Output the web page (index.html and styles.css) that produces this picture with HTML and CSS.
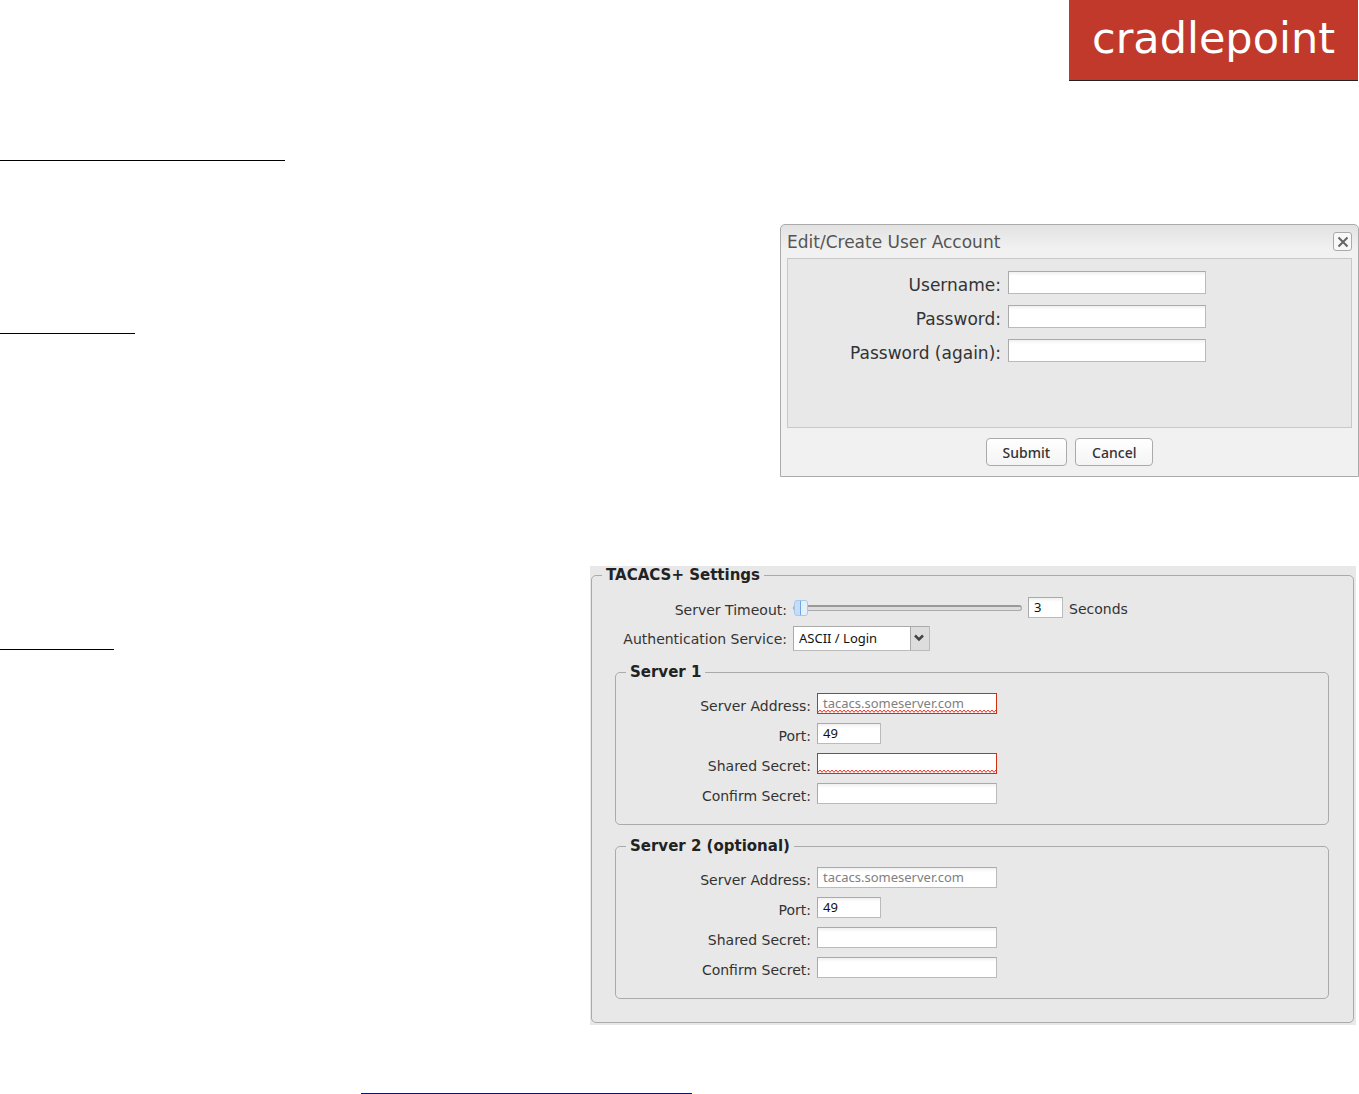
FILE: index.html
```html
<!DOCTYPE html>
<html lang="en">
<head>
  <meta charset="UTF-8" />
  <meta name="viewport" content="width=device-width, initial-scale=1.0"/>
  <title>Cradlepoint - TACACS+ Settings</title>
  <link rel="stylesheet" href="styles.css">
</head>
<body>
  <header class="header">
    <div class="logo">cradlepoint</div>
  </header>

  <main>
    <hr class="rule rule-top">

    <!-- User account -->
    <section class="row row-account">
      <hr class="rule rule-account">

      <form class="dialog">
        <div class="dialog-header">
          <h2>Edit/Create User Account</h2>
          <button type="button" class="close" aria-label="Close">
            <svg width="12" height="12" viewBox="0 0 12 12"><path d="M1.5 1.5l9 9M10.5 1.5l-9 9" stroke="#666" stroke-width="2" fill="none"/></svg>
          </button>
        </div>
        <div class="dialog-body">
          <label for="username">Username:</label>
          <input type="text" id="username">
          <label for="password">Password:</label>
          <input type="password" id="password">
          <label for="password2">Password (again):</label>
          <input type="password" id="password2">
        </div>
        <div class="dialog-footer">
          <button type="button" class="btn">Submit</button>
          <button type="button" class="btn">Cancel</button>
        </div>
      </form>
    </section>

    <!-- TACACS+ -->
    <section class="row row-tacacs">
      <hr class="rule rule-tacacs">

      <form class="panel">
        <fieldset class="outer">
          <legend>TACACS+ Settings</legend>
          <div class="field">
            <label for="timeout">Server Timeout:</label>
            <input type="range" id="timeout" class="slider" min="3" max="60" value="3">
            <input type="text" class="seconds" value="3" aria-label="Timeout in seconds">
            <span>Seconds</span>
          </div>
          <div class="field">
            <label for="service">Authentication Service:</label>
            <span class="select">
              <select id="service">
                <option>ASCII / Login</option>
                <option>PAP</option>
                <option>CHAP</option>
              </select>
              <svg class="arrow" width="10" height="8" viewBox="0 0 10 8"><path d="M1 1.5l4 4 4-4" stroke="#444" stroke-width="2.5" fill="none"/></svg>
            </span>
          </div>

          <fieldset class="server">
            <legend>Server 1</legend>
            <div class="field">
              <label for="address1">Server Address:</label>
              <input type="text" id="address1" class="error" placeholder="tacacs.someserver.com">
            </div>
            <div class="field">
              <label for="port1">Port:</label>
              <input type="text" id="port1" class="port" value="49">
            </div>
            <div class="field">
              <label for="secret1">Shared Secret:</label>
              <input type="password" id="secret1" class="error">
            </div>
            <div class="field">
              <label for="confirm1">Confirm Secret:</label>
              <input type="password" id="confirm1">
            </div>
          </fieldset>

          <fieldset class="server">
            <legend>Server 2 (optional)</legend>
            <div class="field">
              <label for="address2">Server Address:</label>
              <input type="text" id="address2" placeholder="tacacs.someserver.com">
            </div>
            <div class="field">
              <label for="port2">Port:</label>
              <input type="text" id="port2" class="port" value="49">
            </div>
            <div class="field">
              <label for="secret2">Shared Secret:</label>
              <input type="password" id="secret2">
            </div>
            <div class="field">
              <label for="confirm2">Confirm Secret:</label>
              <input type="password" id="confirm2">
            </div>
          </fieldset>
        </fieldset>
      </form>
    </section>

    <hr class="rule rule-bottom">
  </main>
</body>
</html>
```
FILE: styles.css
```css
* {
  margin: 0;
  padding: 0;
  box-sizing: border-box;
}

body {
  background: white;
  color: #333;
  font-family: Verdana, 'DejaVu Sans', sans-serif;
  font-size: 14px;
}

.header {
  display: flex;
  justify-content: flex-end;
  padding-right: 1px;
}

.logo {
  width: 289px;
  height: 81px;
  background: #c0392b;
  border-bottom: 1px solid #222;
  color: white;
  font-family: 'DejaVu Sans', sans-serif;
  font-size: 43px;
  line-height: 76px;
  text-align: center;
}

.rule {
  height: 1px;
  border: none;
  background: black;
}

.rule-top {
  width: 285px;
  margin-top: 79px;
}

.rule-account {
  width: 135px;
  margin-top: 109px;
}

.rule-tacacs {
  width: 114px;
  margin-top: 83px;
}

.rule-bottom {
  width: 331px;
  margin: 68px 0 0 361px;
  background: #0000e0;
}

.row {
  display: grid;
  align-items: start;
}

.row-account {
  grid-template-columns: 780fr 579fr;
  margin-top: 63px;
}

.row-tacacs {
  grid-template-columns: 590fr 766fr;
  margin-top: 89px;
  padding-right: 3px;
}

input,
select {
  height: 21px;
  padding: 0 5px 1px;
  border: 1px solid #b5b8c8;
  border-color: #aaa #bbb #bbb #aaa;
  background: linear-gradient(#f0f0f0, #fff 4px);
  color: #111;
  font-family: 'Noto Sans', sans-serif;
  font-size: 13px;
}

input::placeholder {
  color: #808080;
}

/* dialog */
.dialog {
  padding: 0 6px 10px;
  background: linear-gradient(#e2e2e2, #f1f1f1 24px);
  border: 1px solid #aaa;
  border-radius: 5px 5px 0 0;
}

.dialog-header {
  display: flex;
  justify-content: space-between;
  align-items: center;
  height: 33px;
}

.dialog-header h2 {
  color: #555;
  font-size: 17px;
  font-weight: normal;
}

.close {
  display: flex;
  align-items: center;
  justify-content: center;
  width: 19px;
  height: 19px;
  border: 1px solid #aaa;
  border-radius: 3px;
  background: #f8f8f8;
}

.dialog-body {
  display: grid;
  grid-template-columns: 213px 198px;
  column-gap: 7px;
  row-gap: 11px;
  align-content: start;
  height: 170px;
  padding-top: 12px;
  border: 1px solid #c8c8c8;
  background: #e8e8e8;
  font-size: 17px;
}

.dialog-body label {
  padding-top: 5px;
  line-height: 18px;
  text-align: right;
}

.dialog-body input {
  height: 23px;
}

.dialog-footer {
  display: flex;
  justify-content: center;
  gap: 8px;
  padding-top: 10px;
}

.btn {
  height: 28px;
  padding: 0 16px;
  border: 1px solid #aaa;
  border-radius: 4px;
  background: linear-gradient(#fff, #f4f4f4);
  color: #333;
  font-family: 'Noto Sans', sans-serif;
  font-size: 14px;
  font-weight: 500;
}

/* settings panel */
.panel {
  padding: 0 2px 2px 1px;
  background: #e8e8e8;
}

fieldset {
  border: 1px solid #aaa;
  border-radius: 5px;
}

legend {
  margin-left: 10px;
  padding: 0 4px;
  color: #222;
  font-size: 15px;
  font-weight: bold;
  line-height: 18px;
}

.outer {
  padding: 0 24px 23px 0;
}

.field {
  display: flex;
  gap: 6px;
  height: 22px;
  margin-bottom: 8px;
}

.field label {
  width: 195px;
  line-height: 26px;
  text-align: right;
}

.field input {
  width: 180px;
}

.field .port {
  width: 64px;
}

.field .seconds {
  width: 35px;
}

.field > span {
  line-height: 24px;
}

.outer > .field {
  margin-bottom: 7px;
}

.outer > legend + .field {
  height: 35px;
  padding-top: 13px;
}

.field .slider {
  width: 229px;
  height: 22px;
  padding: 0;
  border: none;
  background: none;
  appearance: none;
}

.slider::-webkit-slider-runnable-track {
  height: 6px;
  border: 1px solid #aaa;
  border-top: 2px solid #999;
  border-radius: 3px;
  background: #ddd;
}

.slider::-webkit-slider-thumb {
  appearance: none;
  width: 14px;
  height: 16px;
  margin-top: -7px;
  border: 1px solid #a5c8ee;
  border-radius: 3px;
  background: linear-gradient(90deg, #c4ddf8 5px, #6fa4e0 5px, #6fa4e0 6px, #e4f1fd 6px);
}

.select {
  position: relative;
  height: 25px;
}

.select select {
  width: 137px;
  height: 25px;
  appearance: none;
  background: linear-gradient(90deg, transparent 116px, #aaa 116px, #aaa 117px, #ddd 117px), #fff;
}

.arrow {
  position: absolute;
  top: 8px;
  right: 6px;
  pointer-events: none;
}

.server {
  margin: 15px 0 0 23px;
  padding: 12px 0 11px;
}

.server + .server {
  margin-top: 12px;
}

.field .error {
  border-color: #d03010;
  background: url("data:image/svg+xml,%3Csvg xmlns='http://www.w3.org/2000/svg' width='4' height='4'%3E%3Cpath d='M-1 4.5L2 1l3 3.5' stroke='%23e83828' fill='none'/%3E%3C/svg%3E") repeat-x left bottom, #fff;
}
```
